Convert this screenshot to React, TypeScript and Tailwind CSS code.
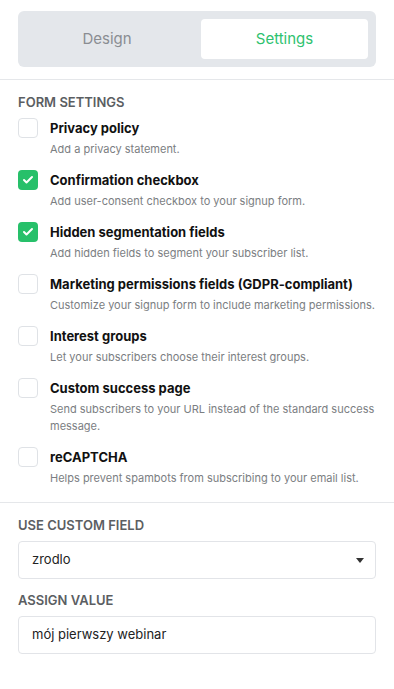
import { Check } from 'lucide-react';

type Option = {
  title: string;
  desc: string;
  checked: boolean;
};

const options: Option[] = [
  { title: 'Privacy policy', desc: 'Add a privacy statement.', checked: false },
  { title: 'Confirmation checkbox', desc: 'Add user-consent checkbox to your signup form.', checked: true },
  { title: 'Hidden segmentation fields', desc: 'Add hidden fields to segment your subscriber list.', checked: true },
  {
    title: 'Marketing permissions fields (GDPR-compliant)',
    desc: 'Customize your signup form to include marketing permissions.',
    checked: false,
  },
  { title: 'Interest groups', desc: 'Let your subscribers choose their interest groups.', checked: false },
  {
    title: 'Custom success page',
    desc: 'Send subscribers to your URL instead of the standard success message.',
    checked: false,
  },
  { title: 'reCAPTCHA', desc: 'Helps prevent spambots from subscribing to your email list.', checked: false },
];

export default function App() {
  return (
    <div className="w-[394px] min-h-[689px] bg-white font-['Inter',sans-serif] text-[#111]">
      <div className="px-[18px] pt-[11px] pb-3 border-b border-[#e5e7ea]">
        <div className="flex h-[56px] rounded-md bg-[#e4e7eb] py-2 pr-2">
          <button className="flex-1 pr-[5px] text-[15px] text-[#8a8d92]">Design</button>
          <button className="w-[167px] shrink-0 rounded bg-white text-[15px] text-[#2ec26f]">Settings</button>
        </div>
      </div>

      <div className="px-[18px] pt-[14px] pb-[15px] border-b border-[#e5e7ea]">
        <h3 className="text-[13px] font-semibold text-[#5b5e62] leading-4 mb-[8px]">FORM SETTINGS</h3>
        <div className="flex flex-col gap-[12px]">
          {options.map((o) => (
            <div key={o.title} className="flex gap-[12px]">
              <div
                className={`w-5 h-5 shrink-0 rounded flex items-center justify-center ${
                  o.checked ? 'bg-[#27c06a]' : 'border border-[#dfe2e6] bg-white'
                }`}
              >
                {o.checked && <Check className="w-3 h-3 text-white" strokeWidth={4} />}
              </div>
              <div>
                <div className="text-[13px] font-bold leading-5 text-[#111]">{o.title}</div>
                <div className="text-[11px] leading-[17px] mt-[3px] text-[#7b7e82]">{o.desc}</div>
              </div>
            </div>
          ))}
        </div>
      </div>

      <div className="px-[18px] pt-[14px]">
        <h3 className="text-[13px] font-semibold text-[#5b5e62] leading-4 mb-[8px]">USE CUSTOM FIELD</h3>
        <div className="flex items-center justify-between h-[38px] border border-[#e2e4e8] rounded px-[13px] text-[13px] text-[#222]">
          <span>zrodlo</span>
          <svg width="8" height="5" viewBox="0 0 8 5" className="mr-[-2px]">
            <path d="M0 0h8L4 5z" fill="#333" />
          </svg>
        </div>
        <h3 className="text-[13px] font-semibold text-[#5b5e62] leading-4 mt-[13px] mb-[8px]">ASSIGN VALUE</h3>
        <div className="flex items-center h-[38px] border border-[#e2e4e8] rounded px-[13px] text-[13px] text-[#222]">
          mój pierwszy webinar
        </div>
      </div>
    </div>
  );
}
